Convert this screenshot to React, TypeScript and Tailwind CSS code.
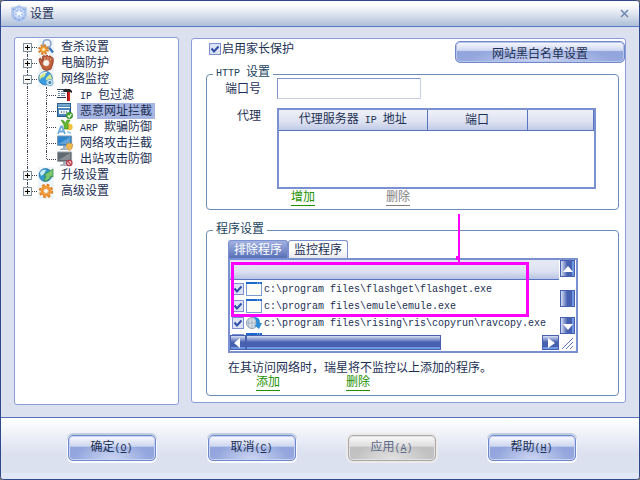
import { useState, type ReactNode } from 'react';

interface TreeItem {
  label: ReactNode;
  icon: ReactNode;
  selected?: boolean;
  open?: boolean;
  children?: TreeItem[];
}

// Latin letters take half the width of a Chinese character
const Half = ({ children }: { children: ReactNode }) => (
  <span className="font-['Liberation_Mono',monospace] text-[10px]">{children}</span>
);

const Icon = ({ children }: { children: ReactNode }) => (
  <svg viewBox="0 0 16 16" className="h-4 w-4 shrink-0" aria-hidden="true">
    {children}
  </svg>
);

const ScanIcon = () => (
  <Icon>
    <rect width="16" height="16" fill="#eef5fb" />
    <path d="M11 8.5l4 5" stroke="#3c78b4" strokeWidth="2.4" />
    <circle cx="9" cy="4.6" r="3.9" fill="#eef5ff" stroke="#92a8d0" strokeWidth="1.8" />
    <circle cx="5.500" cy="10.500" r="4.200" fill="none" stroke="#d87820" strokeWidth="2.400" strokeDasharray="2 1.300" />
    <circle cx="5.500" cy="10.500" r="3.200" fill="#f4a838" stroke="#e08c28" />
    <circle cx="5.500" cy="10.500" r="1.300" fill="#fff4dc" />
  </Icon>
);

const GloveIcon = () => (
  <Icon>
    <rect x="1" width="15" height="16" fill="#f4f0ee" />
    <path
      d="M2 8C0 4 2 2 3.500 4L5 7 4.500 1.500Q6-.5 7 1.500L7.500 1Q9-.8 10 1L10.500 1.500Q12.500 0 13 2 16 2 15 8L13 14Q8 17 5 14Z"
      fill="#c0603c"
      stroke="#883c24"
      strokeWidth="0.9"
    />
    <path d="M7 2v3M10 2v3M13 3l-1 3" stroke="#ecae8c" strokeWidth="0.8" />
    <circle cx="8.200" cy="8" r="3" fill="#f8f4ee" stroke="#e0c8b8" strokeWidth="0.6" />
  </Icon>
);

const GlobeIcon = () => (
  <Icon>
    <rect width="16" height="16" fill="#eef5fb" />
    <circle cx="7.5" cy="7.200" r="6.800" fill="#3a9be0" stroke="#2569a8" strokeWidth="0.7" />
    <path d="M3 3Q7 0 8 3L6 6 3 7 2 9Q0 6 3 3ZM8 7l4-4q2 2 2 5l-3 2-3-1Z" fill="#d4e88c" />
    <path d="M2 4Q5 1 9 1.500" stroke="#e8f8ff" strokeWidth="1.200" fill="none" />
    <circle cx="11.800" cy="11.500" r="3.200" fill="#d4ecf8" stroke="#7cb0d0" />
    <circle cx="11.800" cy="11.500" r="1.500" fill="#3c80ac" />
  </Icon>
);

const HammerIcon = () => (
  <Icon>
    <path d="M0 2.500h9M0 10.500h9" stroke="#303c50" />
    <path d="M1 4.500h2M4 4.500h4M1 6.500h2M4 6.500h4M1 8.500h2M4 8.500h4" stroke="#6c8cb0" />
    <path d="M6 3.500Q8 1 10 2h3l2 2v2l-2-1H7Z" fill="#282828" />
    <rect x="10" y="5" width="3" height="9" fill="#d82020" />
    <path d="M10.500 5v9" stroke="#8c1010" />
  </Icon>
);

const UrlBlockIcon = () => (
  <Icon>
    <rect x="0.500" y="0.500" width="13" height="13" fill="#4a84b8" stroke="#2c5c8c" />
    <path d="M1 2h12" stroke="#a4cce8" />
    <path d="M1 4.500h12" stroke="#fff" />
    <rect x="2" y="7" width="10" height="4" fill="#e8f2fa" />
    <path d="M4 9h1M6.500 9h1M9 9h1" stroke="#203850" strokeWidth="1.200" />
    <circle cx="12.500" cy="12.500" r="3.300" fill="#48a830" stroke="#288018" strokeWidth="0.500" />
    <path d="M10.800 12.500l1.400 1.500 2.200-3" stroke="#fff" strokeWidth="1.200" fill="none" />
  </Icon>
);

const ArpIcon = () => (
  <Icon>
    <circle cx="12.500" cy="8" r="3.200" fill="#f0c040" />
    <path d="M4 1l3 1 1 3 2-4h3l-2 4v5H7V6Z" fill="#68b830" stroke="#3c8c1c" strokeWidth="0.600" />
    <path d="M1 15L4 7.500h1L8 15M2.500 12.500h4" stroke="#6ca8dc" strokeWidth="1.800" fill="none" />
    <path d="M10 13l4 1" stroke="#a4cce8" strokeWidth="2" />
  </Icon>
);

const Monitor = ({ screen, edge }: { screen: string; edge: string }) => (
  <g>
    <rect x="0.500" y="1" width="14" height="9.500" rx="0.800" fill={screen} stroke={edge} strokeWidth="1.200" />
    <path d="M1.500 9L13 2v7Z" fill="#fff" opacity="0.250" />
    <path d="M6 11h3v2H6zM3 14q4-2 8 0v1H3Z" fill="#a4b0bc" />
  </g>
);

const NetAttackIcon = () => (
  <Icon>
    <Monitor screen="#2c84cc" edge="#7c98b0" />
    <path d="M9.500 9l3-1 3 1v2q0 3-3 4.500-3-1.500-3-4.500Z" fill="#f0b850" stroke="#c48830" strokeWidth="0.600" />
  </Icon>
);

const OutAttackIcon = () => (
  <Icon>
    <Monitor screen="#606870" edge="#98a0a8" />
    <circle cx="12.300" cy="12" r="2.700" fill="#f8d0d0" stroke="#b83848" strokeWidth="1.200" />
    <path d="M10.500 10.200l3.600 3.600" stroke="#b83848" strokeWidth="1.200" />
  </Icon>
);

const UpdateIcon = () => (
  <Icon>
    <rect width="16" height="16" fill="#eef5fb" />
    <circle cx="7.500" cy="8" r="6.500" fill="#3498c8" stroke="#2070a0" strokeWidth="0.700" />
    <path d="M2 6Q4 2 8 3L6 7 3 9Z" fill="#c8ecf8" />
    <path d="M6 14l2-5-2-1 9-6v8l-2-1q-2 5-7 5Z" fill="#7cc870" stroke="#348838" strokeWidth="0.700" />
  </Icon>
);

const AdvancedIcon = () => (
  <Icon>
    <rect width="16" height="16" fill="#eef5fb" />
    <circle cx="8" cy="8" r="6" fill="none" stroke="#e08028" strokeWidth="2.400" strokeDasharray="2.700 2" />
    <circle cx="8" cy="8" r="4" fill="#f8f8f8" stroke="#f09838" strokeWidth="3" />
    <circle cx="8" cy="8" r="2.300" fill="#fff" stroke="#c87828" strokeWidth="0.500" />
  </Icon>
);

const ShieldLogo = () => (
  <svg viewBox="0 0 16 18" className="h-[18px] w-4" aria-hidden="true">
    <path d="M.5 2.500Q5 2.500 8 .5q3 2 7.500 2V11q-1 5-7.500 6.500Q1.500 16 .5 11Z" fill="#a8c0ec" stroke="#c0d0ec" />
    <circle cx="8" cy="8" r="4.500" fill="none" stroke="#dce8fc" strokeWidth="1.500" strokeDasharray="1.500 1" />
    <path d="M8 4l1 3h3l-2 2 1 3-3-2-3 2 1-3-2-2h3Z" fill="#f0f6ff" />
    <path d="M2 4.500h2M12 4.500h2M3 13h2M11 13h2M7 15h2" stroke="#88a4dc" />
  </svg>
);

const tree: TreeItem[] = [
  { label: '查杀设置', icon: <ScanIcon /> },
  { label: '电脑防护', icon: <GloveIcon /> },
  {
    label: '网络监控',
    icon: <GlobeIcon />,
    open: true,
    children: [
      { label: <><Half>IP </Half>包过滤</>, icon: <HammerIcon /> },
      { label: '恶意网址拦截', icon: <UrlBlockIcon />, selected: true },
      { label: <><Half>ARP </Half>欺骗防御</>, icon: <ArpIcon /> },
      { label: '网络攻击拦截', icon: <NetAttackIcon /> },
      { label: '出站攻击防御', icon: <OutAttackIcon /> },
    ],
  },
  { label: '升级设置', icon: <UpdateIcon /> },
  { label: '高级设置', icon: <AdvancedIcon /> },
];

const programs = [
  { path: 'c:\\program files\\flashget\\flashget.exe', icon: 'window' },
  { path: 'c:\\program files\\emule\\emule.exe', icon: 'window' },
  { path: 'c:\\program files\\rising\\ris\\copyrun\\ravcopy.exe', icon: 'globe' },
  { path: '', icon: 'window' },
];

const Check = ({ id, label }: { id: string; label?: string }) => (
  <span className="grid h-3 w-3 shrink-0">
    <input
      id={id}
      type="checkbox"
      defaultChecked
      aria-label={label}
      className="peer col-start-1 row-start-1 h-3 w-3 appearance-none border border-[#7b90d0] bg-[#dde3f4]"
    />
    <svg
      viewBox="0 0 12 12"
      className="pointer-events-none invisible col-start-1 row-start-1 h-3 w-3 peer-checked:visible"
      aria-hidden="true"
    >
      <path d="M2.500 5.500L5 8.500l4.500-5" fill="none" stroke="#2f4fa8" strokeWidth="2" />
    </svg>
  </span>
);

const ProgramIcon = ({ kind }: { kind: string }) => (
  <svg viewBox="0 0 16 14" className="h-[14px] w-4 shrink-0" aria-hidden="true">
    {kind === 'window' ? (
      <>
        <rect x="0.500" y="0.500" width="15" height="13" fill="#fdfdf8" stroke="#7b9cd0" />
        <path d="M0 1h16" stroke="#1c68c8" strokeWidth="2" />
        <path d="M11 1h1M13 1h1" stroke="#9cd0f8" />
      </>
    ) : (
      <>
        <circle cx="6" cy="7" r="5.500" fill="#d8e0e8" stroke="#8c9cac" />
        <path d="M1 7h10M6 2v10M3 3q-1 4 0 8M9 3q1 4 0 8" stroke="#98a8b8" strokeWidth="0.700" fill="none" />
        <path d="M7 1q7-1 7 6h2l-3 6-5-4h2q1-6-3-8Z" fill="#2c8cd8" />
      </>
    )}
  </svg>
);

const TreeRow = ({ item, children }: { item: TreeItem; children: ReactNode }) => (
  <div className="flex h-4 items-center">
    {children}
    {item.icon}
    <a
      href="#"
      className={`ml-1 h-4 px-[3px] leading-4 whitespace-nowrap ${item.selected ? 'bg-[#a7b5e2]' : ''}`}
    >
      {item.label}
    </a>
  </div>
);

const SettingsTree = () => (
  <nav className="w-[165px] shrink-0 rounded-[3px] border border-[#8c9cd8] bg-white py-px pl-2">
    <ul>
      {tree.map((item, i) => (
        <li key={i}>
          <TreeRow item={item}>
            <span className="relative flex h-4 w-[9px] items-center">
              <i
                className={`absolute left-1 border-l border-dotted border-[#404858] ${
                  i === 0 ? 'top-2 h-2' : i === tree.length - 1 ? 'top-0 h-2' : 'top-0 h-4'
                }`}
              />
              <button
                aria-label={item.open ? '-' : '+'}
                className="relative grid h-[9px] w-[9px] place-items-center border border-[#8090a0] bg-[#f6f6f2]"
              >
                <i className="col-start-1 row-start-1 h-px w-[5px] bg-black" />
                {!item.open && <i className="col-start-1 row-start-1 h-[5px] w-px bg-black" />}
              </button>
            </span>
            <i className="mr-px w-[5px] border-t border-dotted border-[#404858]" />
          </TreeRow>
          {item.children && (
            <ul>
              {item.children.map((child, j) => (
                <li key={j}>
                  <TreeRow item={child}>
                    <i className="ml-1 h-4 w-[19px] border-l border-dotted border-[#404858]" />
                    <i
                      className={`self-start border-l border-dotted border-[#404858] ${
                        j === item.children!.length - 1 ? 'h-2' : 'h-4'
                      }`}
                    />
                    <i className="mr-px w-[9px] border-t border-dotted border-[#404858]" />
                  </TreeRow>
                </li>
              ))}
            </ul>
          )}
        </li>
      ))}
    </ul>
  </nav>
);

const Group = ({ title, children }: { title: ReactNode; children: ReactNode }) => (
  <fieldset className="min-w-0 rounded-[4px] border border-[#6c8cb4]">
    <legend className="ml-[6px] px-[3px] pb-[3px] leading-[14px] text-[#1c4460]">{title}</legend>
    {children}
  </fieldset>
);

const TextLink = ({ children, muted }: { children: ReactNode; muted?: boolean }) => (
  <a
    href="#"
    className={`border-b leading-[15px] ${
      muted ? 'border-[#808080] text-[#808080]' : 'border-[#209000] text-[#209000]'
    }`}
  >
    {children}
  </a>
);

const DialogButton = ({ label, hotkey, disabled }: { label: string; hotkey: string; disabled?: boolean }) => (
  <button
    disabled={disabled}
    className={`h-[26px] w-[88px] rounded-[5px] border ${
      disabled
        ? 'border-[#a8a8a8] bg-[radial-gradient(ellipse_at_bottom,#e2e2e2_0%,#e2e2e200_60%),linear-gradient(#fafafa_0%,#dedede_42%,#c0c0c0_48%,#c4c4c4_100%)] text-[#5c6888] shadow-[inset_0_0_0_1px_#e2e2e2,0_0_0_2px_#ecebea]'
        : 'border-[#7088cc] bg-[radial-gradient(ellipse_at_bottom,#cdd6f2_0%,#cdd6f200_60%),linear-gradient(#fafbff_0%,#ced7f0_42%,#92a5dc_48%,#96a8de_100%)] shadow-[inset_0_0_0_1px_#c8d2f2,0_1px_0_1px_#f8faff,0_-1px_0_1px_#c0cede]'
    }`}
  >
    {label}
    <Half>
      (<u>{hotkey}</u>)
    </Half>
  </button>
);

const acrossBar = 'border border-[#4860b0] bg-[linear-gradient(#d8e0f4_0%,#4860b0_48%,#4860b0_84%,#7098e0_85%)]';
const downBar = 'border border-[#4860b0] bg-[linear-gradient(90deg,#d8e0f4_0%,#4860b0_48%,#4860b0_84%,#7098e0_85%)]';

const Arrow = ({ d, label, className }: { d: string; label: string; className: string }) => (
  <button aria-label={label} className={`grid shrink-0 place-items-center ${className}`}>
    <svg viewBox="0 0 10 10" className="h-[10px] w-[10px]" aria-hidden="true">
      <path d={d} fill="#fff" />
    </svg>
  </button>
);

const ProgramList = () => (
  <div className="relative border-2 border-[#7b90d0] bg-white">
    <div className="flex">
      <div className="h-[75px] min-w-0 flex-1 overflow-hidden">
        <div className="h-5 border-b border-[#5874c0] bg-linear-to-b from-[#e4e8f4] from-20% via-[#dce1f1] via-60% to-[#b8c4e4]" />
        <ul>
          {programs.map((program, i) => (
            <li key={i} className="flex h-[17px] items-center gap-[2px] pl-[2px]">
              <Check id={`program-${i}`} label={program.path || 'program'} />
              <ProgramIcon kind={program.icon} />
              <label htmlFor={`program-${i}`} className="whitespace-pre">
                <Half>{program.path}</Half>
              </label>
            </li>
          ))}
        </ul>
      </div>
      <div className="mr-px ml-px flex w-[15px] flex-col">
        <Arrow d="M5 2l5 6H0Z" label="up" className={`h-[17px] w-[15px] ${downBar}`} />
        <i className={`mt-[13px] h-[17px] ${downBar}`} />
        <Arrow d="M0 3h10L5 9Z" label="down" className={`mt-[10px] h-[17px] w-[15px] ${downBar}`} />
      </div>
    </div>
    <div className="flex h-4 pb-px">
      <Arrow d="M7 0v10L1 5Z" label="left" className={`w-4 ${acrossBar}`} />
      <i className={`w-[195px] ${acrossBar}`} />
      <i className="flex-1" />
      <Arrow d="M2 0v10l7-5Z" label="right" className={`w-[17px] ${acrossBar}`} />
      <svg viewBox="0 0 17 15" className="h-[15px] w-[17px]" aria-hidden="true">
        <path d="M3 14L14 3M7 14l7-7M11 14l3-3" stroke="#6078b8" />
      </svg>
    </div>
    {/* callout marking the header and the first two programs */}
    <div className="pointer-events-none absolute top-[2px] left-px h-[55px] w-[298px] border-[3px] border-[#ff00ff]" />
    <div className="pointer-events-none absolute -top-[46px] left-[228px] h-12 w-[2px] bg-[#ff00ff]" />
    <div className="pointer-events-none absolute -top-1 left-[226px] h-1 w-[3px] bg-[#ff00ff]" />
  </div>
);

const App = () => {
  const [tab, setTab] = useState('排除程序');

  return (
    <div className="flex min-h-screen flex-col bg-[#7c7a74] font-['Liberation_Sans','Noto_Sans_CJK_SC',sans-serif] text-[12px] leading-4 text-[#1c3054]">
      <div className="flex flex-1 flex-col overflow-hidden rounded-[4px] border border-[#30488c] bg-[#dce1f0]">
        <header className="flex h-[26px] items-center border-b border-[#5878c8] bg-linear-to-b from-white from-10% via-[#e4e9f2] via-45% to-[#aebfd8] pr-[10px] pl-[10px]">
          <ShieldLogo />
          <h1 className="ml-[3px] flex-1">设置</h1>
          <button aria-label="close">
            <svg viewBox="0 0 9 9" className="h-[9px] w-[9px]" aria-hidden="true">
              <path d="M1 1l7 7M8 1L1 8" stroke="#6c88b0" strokeWidth="1.500" />
            </svg>
          </button>
        </header>

        <main className="flex flex-1 gap-3 px-[13px] pt-[10px] pb-3">
          <SettingsTree />

          <section className="mt-px mb-[2px] min-w-0 flex-1 rounded-[3px] border border-[#8c9cd8] bg-white">
            <div className="flex justify-between">
              <div className="flex items-center gap-px pb-1 pl-[17px]">
                <Check id="parental" />
                <label htmlFor="parental">启用家长保护</label>
              </div>
              <button className="mt-[2px] h-[22px] w-[170px] rounded-[5px] border border-[#7088cc] bg-[radial-gradient(ellipse_at_bottom,#cdd6f2_0%,#cdd6f200_60%),linear-gradient(#fafbff_0%,#ced7f0_42%,#92a5dc_48%,#96a8de_100%)] pt-[3px] shadow-[inset_0_0_0_1px_#b8c4ea]">
                网站黑白名单设置
              </button>
            </div>

            <div className="flex flex-col gap-3 pt-[2px] pr-[6px] pb-1 pl-[14px]">
              <Group title={<><Half>HTTP </Half>设置</>}>
                <div className="-mt-[6px] flex gap-4 pl-[18px]">
                  <label htmlFor="port" className="w-9 pt-[3px] text-right leading-4">端口号</label>
                  <input id="port" className="h-[21px] w-36 border border-t-[#8094c8] border-r-[#c8d0e8] border-b-[#c8d0e8] border-l-[#8094c8] bg-white px-1 outline-none" />
                </div>
                <div className="mt-[9px] flex gap-4 pr-[22px] pl-[18px]">
                  <span id="proxy" className="w-9 text-right">代理</span>
                  <div className="h-[81px] min-w-0 flex-1 border-2 border-[#7b90d0]">
                    <table aria-labelledby="proxy" className="w-full table-fixed border-collapse">
                      <thead>
                        <tr className="h-5 bg-linear-to-b from-[#eef0f8] from-5% via-[#dce1f1] via-60% to-[#c0cae6]">
                          <th className="w-[148px] border-r border-b border-[#5874c0] p-0 font-normal">
                            代理服务器<Half> IP </Half>地址
                          </th>
                          <th className="w-[100px] border-r border-b border-[#5874c0] p-0 font-normal">端口</th>
                          <th className="border-r border-b border-[#5874c0] p-0" />
                        </tr>
                      </thead>
                      <tbody />
                    </table>
                  </div>
                </div>
                <div className="flex gap-[71px] pt-px pb-[3px] pl-[84px]">
                  <TextLink>增加</TextLink>
                  <TextLink muted>删除</TextLink>
                </div>
              </Group>

              <Group title="程序设置">
                <div className="pt-px pr-10 pl-[21px]">
                  <div role="tablist" className="flex">
                    {['排除程序', '监控程序'].map((name) => (
                      <button
                        key={name}
                        role="tab"
                        aria-selected={tab === name}
                        onClick={() => setTab(name)}
                        className={`h-[18px] w-[60px] rounded-t-[3px] border border-b-0 border-[#7b90d0] ${
                          tab === name
                            ? 'bg-linear-to-b from-[#a4b2e0] to-[#5870b8] text-white'
                            : 'bg-linear-to-b from-white from-50% to-[#e8e8f0]'
                        }`}
                      >
                        {name}
                      </button>
                    ))}
                  </div>
                  <ProgramList />
                  <p className="mt-[7px]">在其访问网络时，瑞星将不监控以上添加的程序。</p>
                  <div className="-mt-px flex gap-[66px] pb-1 pl-7">
                    <TextLink>添加</TextLink>
                    <TextLink>删除</TextLink>
                  </div>
                </div>
              </Group>
            </div>
          </section>
        </main>

        <footer className="border-t border-b-[6px] border-t-[#5874b8] border-b-[#e3e8f8] bg-linear-to-b from-white to-[#dce1f0] to-65%">
          <div className="flex justify-center gap-[52px] pt-[17px] pb-3 pl-[3px]">
            <DialogButton label="确定" hotkey="O" />
            <DialogButton label="取消" hotkey="C" />
            <DialogButton label="应用" hotkey="A" disabled />
            <DialogButton label="帮助" hotkey="H" />
          </div>
        </footer>
      </div>
    </div>
  );
};

export default App;
